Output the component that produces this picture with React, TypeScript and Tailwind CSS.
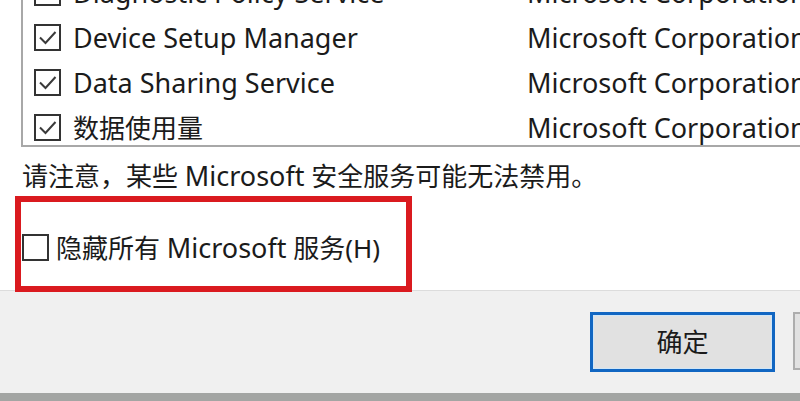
import React from "react";

const font = '"Noto Sans", "Noto Sans CJK SC", sans-serif';

function Check({ checked }: { checked: boolean }) {
  return (
    <div className="w-[27px] h-[27px] border-2 border-[#333333] bg-white shrink-0 flex items-center justify-center">
      {checked && (
        <svg width="23" height="23" viewBox="0 0 23 23">
          <path d="M4 11.5 L9.5 17 L19.5 6" fill="none" stroke="#3a3a3a" strokeWidth="2" />
        </svg>
      )}
    </div>
  );
}

const rows = [
  ["Diagnostic Policy Service", "Microsoft Corporation"],
  ["Device Setup Manager", "Microsoft Corporation"],
  ["Data Sharing Service", "Microsoft Corporation"],
  ["数据使用量", "Microsoft Corporation"],
];

export default function App() {
  return (
    <div
      className="relative w-[800px] h-[401px] overflow-hidden bg-white text-[#1b1b1b] flex flex-col"
      style={{ fontFamily: font }}
    >
      <div className="h-[290px] flex flex-col shrink-0">
        <div className="ml-[21px] w-[800px] h-[147px] border-l-2 border-b-2 border-[#a8a8a8] overflow-hidden shrink-0">
          <div className="mt-[-30px] flex flex-col">
            {rows.map(([name, corp]) => (
              <div key={name} className="h-[45px] flex items-center pl-[11px]">
                <Check checked />
                <span className="ml-[12px] w-[454px] text-[27px] leading-none whitespace-nowrap">
                  {name === "数据使用量" ? <span className="text-[26px]">{name}</span> : name}
                </span>
                <span className="text-[27px] leading-none whitespace-nowrap">{corp}</span>
              </div>
            ))}
          </div>
        </div>
        <div className="ml-[22px] mt-[14px] text-[26px] leading-[30px] whitespace-nowrap">
          请注意，某些 <span className="text-[27px]">Microsoft</span> 安全服务可能无法禁用。
        </div>
        <div className="ml-[22px] mt-[43px] flex items-center">
          <Check checked={false} />
          <span className="ml-[7px] text-[26px] leading-none whitespace-nowrap">
            隐藏所有 <span className="text-[27px]">Microsoft</span> 服务(H)
          </span>
        </div>
      </div>
      <div className="flex-1 bg-[#f0f0f0] border-t border-[#dcdcdc] flex items-start pt-[21px] pl-[590px]">
        <div className="w-[185px] h-[60px] shrink-0 border-[3px] border-[#1166c2] bg-[#e1e1e1]">
          <div className="w-full h-full border border-[#cfe6f8] flex items-center justify-center text-[26px] leading-none">
            确定
          </div>
        </div>
        <div className="ml-[18px] w-[80px] h-[58px] border-2 border-[#adadad] bg-[#e1e1e1] shrink-0" />
      </div>
      <div className="h-[8px] bg-[#a3a5a3] shrink-0" />
      <div className="absolute left-[15px] top-[196px] w-[397px] h-[96px] border-[6px] border-[#da1a1f]" />
    </div>
  );
}
